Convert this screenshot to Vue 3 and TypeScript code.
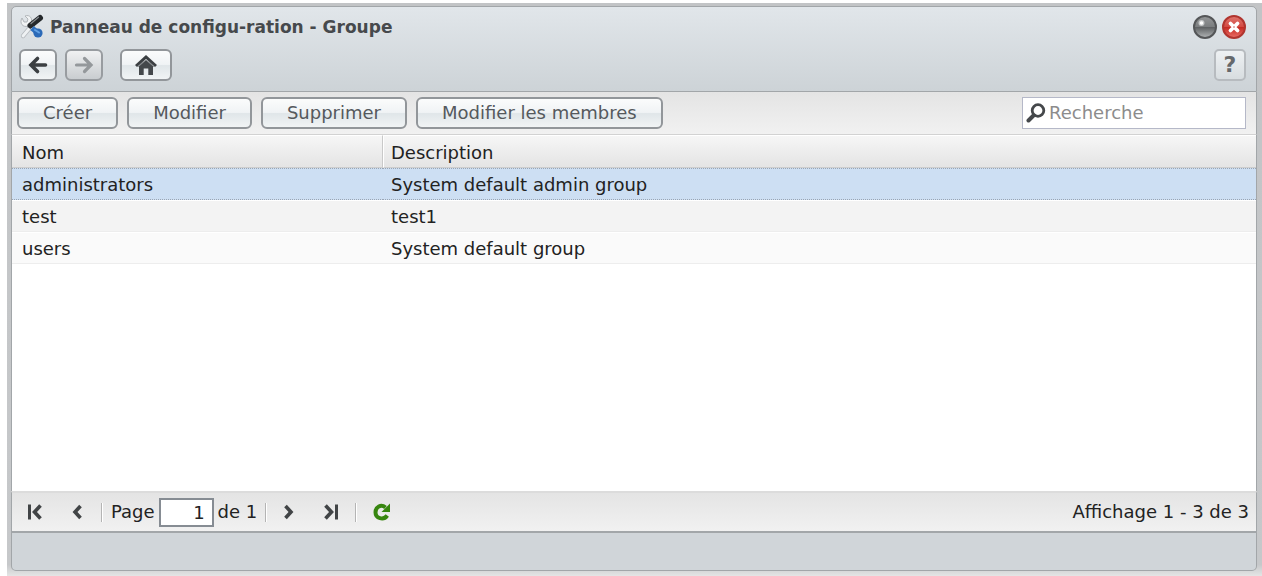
<script setup lang="ts">
import { ref } from 'vue'

interface Group {
  name: string
  description: string
}

const groups: Group[] = [
  { name: 'administrators', description: 'System default admin group' },
  { name: 'test', description: 'test1' },
  { name: 'users', description: 'System default group' },
]
const actions: string[] = ['Créer', 'Modifier', 'Supprimer', 'Modifier les membres']
const selected = ref<string>('administrators')
const search = ref<string>('')
const page = ref<string>('1')
</script>

<template>
  <main class="desktop">
    <section class="window">
      <header class="head">
        <div class="title-row">
          <svg class="tools" width="26" height="26" viewBox="0 0 26 26" aria-hidden="true">
            <path d="M4 22 L12 12.500" stroke="#b4b9bd" stroke-width="4.400" stroke-linecap="round" />
            <path d="M4 22 L12 12.500" stroke="#eef1f3" stroke-width="2.800" stroke-linecap="round" />
            <path d="M3 4 C0 9 4 14 9 12 L13 16 L16 13 L12 9 C14 5 11 0 6 2 L9 5 L8 8 L5 8 Z" fill="#f1f3f4" stroke="#b0b5b9" />
            <path d="M11.500 11.500 L21 4" stroke="#24282b" stroke-width="6" stroke-linecap="round" />
            <path d="M12 9.500 L19.500 3.200" stroke="#8a8f93" stroke-width="1.200" stroke-linecap="round" />
            <path d="M13 14 L19 19" stroke="#2f70be" stroke-width="5.500" />
            <circle cx="19" cy="19" r="4.600" fill="#2b6ab8" />
            <path d="M16 16 L20 18.500" stroke="#62a1e4" stroke-width="2" stroke-linecap="round" />
          </svg>
          <h1>Panneau de configu-ration - Groupe</h1>
          <div class="window-buttons">
            <button class="orb" type="button" aria-label="Réduire">
              <svg width="24" height="24" viewBox="0 0 24 24" aria-hidden="true">
                <defs>
                  <linearGradient id="orb-grey" x1="0" y1="0" x2="0" y2="1">
                    <stop offset="0" stop-color="#969899" />
                    <stop offset=".48" stop-color="#7b7e80" />
                    <stop offset=".52" stop-color="#5f6264" />
                    <stop offset="1" stop-color="#b4b7b8" />
                  </linearGradient>
                </defs>
                <circle cx="12" cy="12" r="11" fill="url(#orb-grey)" stroke="#545658" stroke-width="2" />
                <circle cx="8.500" cy="8" r="3" fill="#c4c6c7" />
                <circle cx="8.500" cy="8" r="1.800" fill="#fff" />
              </svg>
            </button>
            <button class="orb" type="button" aria-label="Fermer">
              <svg width="24" height="24" viewBox="0 0 24 24" aria-hidden="true">
                <defs>
                  <linearGradient id="orb-red" x1="0" y1="0" x2="0" y2="1">
                    <stop offset="0" stop-color="#df7770" />
                    <stop offset=".48" stop-color="#d44a42" />
                    <stop offset=".52" stop-color="#c52b23" />
                    <stop offset="1" stop-color="#ec7069" />
                  </linearGradient>
                </defs>
                <circle cx="12" cy="12" r="11" fill="url(#orb-red)" stroke="#b0352f" stroke-width="2" />
                <path d="M8.500 8.500 L15.500 15.500 M15.500 8.500 L8.500 15.500" stroke="#fff" stroke-width="3.800" stroke-linecap="round" />
                <circle cx="12" cy="12" r="1" fill="#dba09c" />
              </svg>
            </button>
          </div>
        </div>
        <nav class="nav-row">
          <button class="btn nav" type="button" aria-label="Précédent">
            <svg width="20" height="20" viewBox="0 0 20 20" aria-hidden="true">
              <path d="M17.500 10 H4 M9.500 3.500 L3 10 L9.500 16.500" fill="none" stroke="#3b3f42" stroke-width="3.600" stroke-linecap="round" />
            </svg>
          </button>
          <button class="btn nav off" type="button" aria-label="Suivant" disabled>
            <svg width="20" height="20" viewBox="0 0 20 20" aria-hidden="true">
              <path d="M2.500 10 H16 M10.500 3.500 L17 10 L10.500 16.500" fill="none" stroke="#94989b" stroke-width="3.200" stroke-linecap="round" />
            </svg>
          </button>
          <button class="btn home" type="button" aria-label="Accueil">
            <svg width="22" height="22" viewBox="0 0 22 22" aria-hidden="true">
              <path d="M4 11.500 L11 5.500 L18 11.500 V21 H13.300 V14.500 H8.700 V21 H4 Z" fill="#44484b" />
              <path d="M1 12 L11 3 L21 12" fill="none" stroke="#3b3f42" stroke-width="3" />
              <path d="M3 12.800 L11 6 L19 12.800" fill="none" stroke="#8b8f92" stroke-width="1" />
            </svg>
          </button>
          <button class="help" type="button" aria-label="Aide">?</button>
        </nav>
      </header>

      <div class="toolbar">
        <button v-for="action in actions" :key="action" class="btn action" type="button">{{ action }}</button>
        <label class="search">
          <svg width="20" height="20" viewBox="0 0 20 20" aria-hidden="true">
            <circle cx="12" cy="7.500" r="5.800" fill="none" stroke="#45484b" stroke-width="2.800" />
            <path d="M7.500 12.500 L2.500 17.500" stroke="#45484b" stroke-width="4" stroke-linecap="round" />
          </svg>
          <input v-model="search" type="text" placeholder="Recherche" aria-label="Recherche" />
        </label>
      </div>

      <div class="grid">
        <table>
          <colgroup>
            <col class="col-name" />
            <col />
          </colgroup>
          <thead>
            <tr>
              <th scope="col">Nom</th>
              <th scope="col">Description</th>
            </tr>
          </thead>
          <tbody>
            <tr
              v-for="group in groups"
              :key="group.name"
              :class="{ selected: group.name === selected }"
              @click="selected = group.name"
            >
              <td>{{ group.name }}</td>
              <td>{{ group.description }}</td>
            </tr>
          </tbody>
        </table>
      </div>

      <div class="pager">
        <button class="flat" type="button" aria-label="Première page">
          <svg width="16" height="16" viewBox="0 0 16 16" aria-hidden="true">
            <path d="M2.500 0.500 V15.500" stroke="#414446" stroke-width="3" />
            <path d="M13.500 1.500 L7.500 8 L13.500 14.500" fill="none" stroke="#414446" stroke-width="3.600" />
          </svg>
        </button>
        <button class="flat" type="button" aria-label="Page précédente">
          <svg width="16" height="16" viewBox="0 0 16 16" aria-hidden="true">
            <path d="M11.500 2 L6 8 L11.500 14" fill="none" stroke="#414446" stroke-width="3.600" />
          </svg>
        </button>
        <span class="sep"></span>
        <label class="page">Page<input v-model="page" type="text" /></label>
        <span class="total">de 1</span>
        <span class="sep"></span>
        <button class="flat" type="button" aria-label="Page suivante">
          <svg width="16" height="16" viewBox="0 0 16 16" aria-hidden="true">
            <path d="M4.500 2 L10 8 L4.500 14" fill="none" stroke="#414446" stroke-width="3.600" />
          </svg>
        </button>
        <button class="flat" type="button" aria-label="Dernière page">
          <svg width="16" height="16" viewBox="0 0 16 16" aria-hidden="true">
            <path d="M13.500 0.500 V15.500" stroke="#414446" stroke-width="3" />
            <path d="M2.500 1.500 L8.500 8 L2.500 14.500" fill="none" stroke="#414446" stroke-width="3.600" />
          </svg>
        </button>
        <span class="sep wide"></span>
        <button class="flat" type="button" aria-label="Actualiser">
          <svg width="18" height="18" viewBox="0 0 18 18" aria-hidden="true">
            <path d="M12.500 4.500 C8 0.500 2.500 4 2.500 9.200 C2.500 15.500 10.500 17.800 14.300 12.500" fill="none" stroke="#37860f" stroke-width="4" />
            <path d="M17 0.500 V9 H8.500 Z" fill="#37860f" />
          </svg>
        </button>
        <span class="status">Affichage 1 - 3 de 3</span>
      </div>
      <footer class="foot"></footer>
    </section>
  </main>
</template>

<style>
html,
body {
  background: #fff;
}
</style>

<style scoped>
.desktop {
  box-sizing: border-box;
  height: 100vh;
  min-height: 360px;
  padding: 3px 0 0 7px;
  font: 18px/22px 'DejaVu Sans', Verdana, sans-serif;
  color: #222;
}
.window {
  box-sizing: border-box;
  display: flex;
  flex-direction: column;
  height: 100%;
  padding: 3px 5px 5px 4px;
  background: linear-gradient(#c2c4c6, #c6c8ca 98%, #e4e5e5);
}
button,
input {
  font: inherit;
}
button {
  padding: 0;
}
svg {
  display: block;
  flex: none;
}
.head,
.toolbar,
.grid,
.pager,
.foot {
  border: 0 solid #a2a6a9;
  border-width: 0 1px;
}
.head {
  box-sizing: border-box;
  display: flex;
  flex-direction: column;
  height: 86px;
  padding: 5px 10px 7px 7px;
  gap: 7px;
  border-width: 1px;
  border-radius: 5px 5px 0 0;
  background: linear-gradient(#e1e6ea, #cdd3d7);
}
.title-row,
.nav-row {
  display: flex;
  align-items: center;
}
.title-row {
  height: 30px;
}
h1 {
  margin: 0 0 0 5px;
  font-size: 17px;
  line-height: 22px;
  font-weight: bold;
  color: #46494c;
}
.window-buttons {
  display: flex;
  gap: 5px;
  margin-left: auto;
}
.orb {
  border: 0;
  border-radius: 50%;
  background: none;
}
.btn {
  box-sizing: border-box;
  display: flex;
  align-items: center;
  justify-content: center;
  height: 32px;
  border: 2px solid #92969a;
  border-radius: 6px;
  background: linear-gradient(#fbfcfc, #f0f3f5 48%, #e0e6e9 52%, #f1f4f5);
  color: #55595d;
}
.nav {
  width: 38px;
  margin-right: 8px;
}
.nav.off {
  border-color: #989ca0;
  background: linear-gradient(#f0f1f2, #c9cdd0);
}
.home {
  width: 52px;
  margin-left: 9px;
}
.help {
  box-sizing: border-box;
  width: 32px;
  height: 32px;
  margin-left: auto;
  border: 2px solid #b7bbbf;
  border-radius: 5px;
  background: linear-gradient(#eef1f3, #d8dde0);
  color: #66696c;
  font-size: 22px;
  font-weight: bold;
  line-height: 26px;
}
.toolbar {
  display: flex;
  align-items: center;
  gap: 9px;
  height: 42px;
  padding: 0 10px 0 5px;
  border-bottom: 1px solid #d2d2d2;
  background: linear-gradient(#e4e4e4, #f1f1f1);
}
.action {
  padding: 0 24px;
}
.search {
  box-sizing: border-box;
  display: flex;
  align-items: center;
  width: 224px;
  height: 32px;
  margin-left: auto;
  padding-left: 3px;
  gap: 3px;
  border: 1px solid #b5b8c8;
  background: #fff;
}
.search input {
  flex: 1;
  min-width: 0;
  padding: 0;
  border: 0;
  outline: 0;
  background: none;
  color: #222;
}
.search input::placeholder {
  color: #8c8c8c;
  opacity: 1;
}
.grid {
  flex: 1;
  min-height: 0;
  overflow: auto;
  background: #fff;
}
table {
  width: 100%;
  table-layout: fixed;
  border-collapse: separate;
  border-spacing: 0;
}
.col-name {
  width: 371px;
}
th,
td {
  box-sizing: border-box;
  height: 32px;
  padding: 2px 10px 0;
  text-align: left;
  font-weight: normal;
}
td {
  border-top: 1px solid #fff;
  border-bottom: 1px solid #ededed;
}
th:first-child {
  border-right: 1px solid #c9c9c9;
}
th {
  height: 33px;
  border-top: 1px solid #fff;
  border-bottom: 1px solid #cdcdcd;
  background: linear-gradient(#f6f6f6, #e4e4e4);
}
th + th {
  border-left: 1px solid #fff;
  padding-left: 7px;
}
td + td {
  padding-left: 8px;
}
tbody tr:nth-child(2) {
  background: #f3f3f3;
}
tbody tr:nth-child(3) {
  background: #fafafa;
}
tbody tr.selected {
  background: #cddff3;
}
.selected td {
  border-top: 1px dotted #9aa5b3;
  border-bottom: 1px dotted #9aa5b3;
}
.pager {
  display: flex;
  align-items: center;
  height: 38px;
  padding: 0 7px 0 14px;
  border-top: 2px solid #dcdcdc;
  background: linear-gradient(#e4e4e4, #f1f1f1);
}
.flat {
  display: flex;
  align-items: center;
  justify-content: center;
  width: 18px;
  height: 30px;
  border: 0;
  background: none;
}
.flat + .flat {
  margin-left: 24px;
}
.sep {
  width: 1px;
  height: 19px;
  margin: 0 8px 0 15px;
  border-right: 1px solid #fff;
  background: #b4b4b4;
}
.sep.wide {
  margin-right: 16px;
}
.page {
  display: flex;
  align-items: center;
  gap: 4px;
}
.page input {
  box-sizing: border-box;
  width: 55px;
  height: 29px;
  padding: 0 7px;
  border: 2px solid #868c93;
  text-align: right;
  color: #222;
  background: #fff;
}
.page,
.total,
.status {
  line-height: 26px;
}
.total {
  margin-left: 4px;
}
.total + .sep {
  margin: 0 13px 0 8px;
}
.status {
  margin-left: auto;
}
.foot {
  height: 37px;
  border-top: 2px solid #a2a6a9;
  border-bottom: 1px solid #a2a6a9;
  border-radius: 0 0 5px 5px;
  background: #d0d5d9;
}
</style>
